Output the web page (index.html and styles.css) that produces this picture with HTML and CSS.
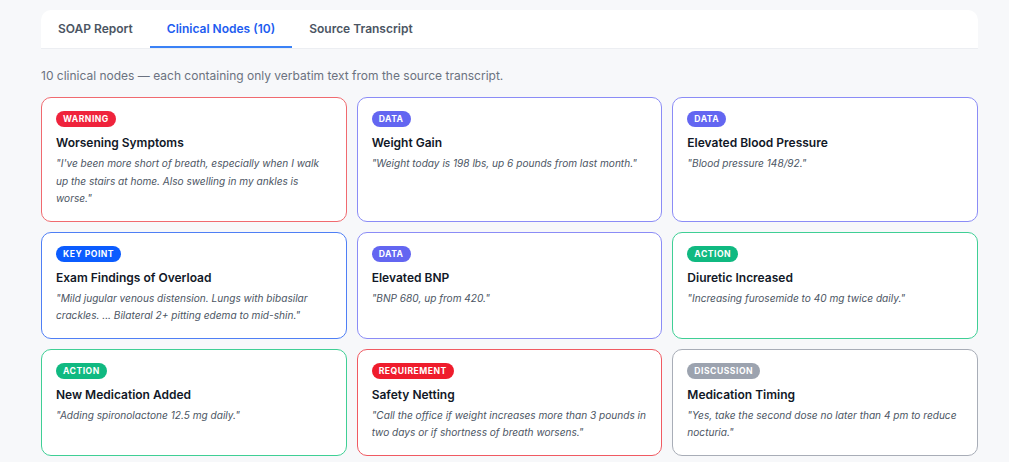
FILE: index.html
```html
<!DOCTYPE html>
<html lang="en">
<head>
<meta charset="utf-8">
<title>Clinical Nodes</title>
<link rel="stylesheet" href="styles.css">
</head>
<body>
<main class="page">
  <nav class="tabs">
    <button class="tab">SOAP Report</button>
    <button class="tab active">Clinical Nodes (10)</button>
    <button class="tab">Source Transcript</button>
  </nav>
  <p class="summary">10 clinical nodes — each containing only verbatim text from the source transcript.</p>
  <section class="grid">
    <article class="card warning">
      <span class="badge">Warning</span>
      <h3 class="title">Worsening Symptoms</h3>
      <p class="quote">"I've been more short of breath, especially when I walk up the stairs at home. Also swelling in my ankles is worse."</p>
    </article>
    <article class="card data">
      <span class="badge">Data</span>
      <h3 class="title">Weight Gain</h3>
      <p class="quote">"Weight today is 198 lbs, up 6 pounds from last month."</p>
    </article>
    <article class="card data">
      <span class="badge">Data</span>
      <h3 class="title">Elevated Blood Pressure</h3>
      <p class="quote">"Blood pressure 148/92."</p>
    </article>
    <article class="card key">
      <span class="badge">Key Point</span>
      <h3 class="title">Exam Findings of Overload</h3>
      <p class="quote">"Mild jugular venous distension. Lungs with bibasilar crackles. ... Bilateral 2+ pitting edema to mid-shin."</p>
    </article>
    <article class="card data">
      <span class="badge">Data</span>
      <h3 class="title">Elevated BNP</h3>
      <p class="quote">"BNP 680, up from 420."</p>
    </article>
    <article class="card action">
      <span class="badge">Action</span>
      <h3 class="title">Diuretic Increased</h3>
      <p class="quote">"Increasing furosemide to 40 mg twice daily."</p>
    </article>
    <article class="card action">
      <span class="badge">Action</span>
      <h3 class="title">New Medication Added</h3>
      <p class="quote">"Adding spironolactone 12.5 mg daily."</p>
    </article>
    <article class="card requirement">
      <span class="badge">Requirement</span>
      <h3 class="title">Safety Netting</h3>
      <p class="quote">"Call the office if weight increases more than 3 pounds in two days or if shortness of breath worsens."</p>
    </article>
    <article class="card discussion">
      <span class="badge">Discussion</span>
      <h3 class="title">Medication Timing</h3>
      <p class="quote">"Yes, take the second dose no later than 4 pm to reduce nocturia."</p>
    </article>
  </section>
</main>
</body>
</html>
```
FILE: styles.css
```css
* { box-sizing: border-box; }
html, body { margin: 0; padding: 0; }
body {
  background: #f7f8fa;
  font-family: Inter, "Noto Sans", "Liberation Sans", sans-serif;
  color: #111827;
}
.page {
  width: 937px;
  margin: 0 0 0 41px;
  padding-top: 10px;
}
.tabs {
  display: flex;
  background: #ffffff;
  border-radius: 10px 10px 0 0;
  border-bottom: 1px solid #eceef2;
  height: 39px;
}
.tab {
  font-family: inherit;
  font-size: 12px;
  font-weight: 600;
  color: #4b5563;
  background: none;
  border: none;
  border-bottom: 2px solid transparent;
  padding: 0 17px;
  margin: 0;
  height: 38px;
  cursor: pointer;
}
.tab.active {
  color: #1d5cf0;
  border-bottom-color: #3b82f6;
}
.summary {
  margin: 19px 0 0;
  font-size: 12px;
  color: #6b7280;
  line-height: 16px;
}
.grid {
  margin-top: 13px;
  display: grid;
  grid-template-columns: repeat(3, 1fr);
  column-gap: 10px;
  row-gap: 10px;
}
.card {
  background: #ffffff;
  border: 1.5px solid #d1d5db;
  border-radius: 10px;
  padding: 13px 12.5px 13px 14px;
  display: flex;
  flex-direction: column;
  align-items: flex-start;
}
.badge {
  display: inline-block;
  font-size: 8.6px;
  font-weight: 700;
  letter-spacing: 0.5px;
  text-transform: uppercase;
  color: #ffffff;
  line-height: 16px;
  height: 16px;
  padding: 0 7px;
  border-radius: 8px;
}
.title {
  margin: 7px 0 0;
  font-size: 12px;
  font-weight: 600;
  line-height: 17px;
  color: #111827;
}
.quote {
  margin: 4px 0 0;
  font-size: 10.1px;
  font-style: italic;
  line-height: 17.5px;
  color: #4b5563;
}
.warning { border-color: #f06a6f; }
.warning .badge { background: #ef233c; }
.data { border-color: #8b8cf6; }
.data .badge { background: #6366f1; }
.key { border-color: #4f7ff5; }
.key .badge { background: #0b5cff; }
.action { border-color: #3fcf95; }
.action .badge { background: #10b981; }
.requirement { border-color: #f05a62; }
.requirement .badge { background: #ef1c2c; }
.discussion { border-color: #a8adb7; }
.discussion .badge { background: #9ca3af; }
```
